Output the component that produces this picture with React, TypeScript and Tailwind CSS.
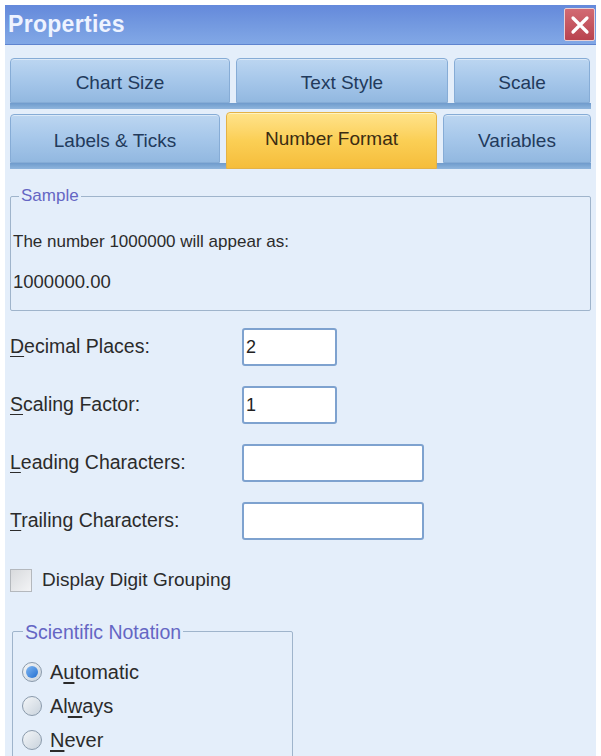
import React from 'react';

const font = { fontFamily: '"Liberation Sans", Arial, sans-serif' };

type Tab = { label: string; w: string; active?: boolean };

const row1: Tab[] = [
  { label: 'Chart Size', w: 'w-[220px]' },
  { label: 'Text Style', w: 'w-[212px]' },
  { label: 'Scale', w: 'w-[136px]' },
];

const row2: Tab[] = [
  { label: 'Labels & Ticks', w: 'w-[210px]' },
  { label: 'Number Format', w: 'w-[211px]', active: true },
  { label: 'Variables', w: 'w-[148px]' },
];

function TabRow({ tabs, h }: { tabs: Tab[]; h: string }) {
  return (
    <div className="flex flex-col">
      <div className={`flex items-end gap-[6px] px-[5px] ${h}`}>
        {tabs.map((t) =>
          t.active ? (
            <div
              key={t.label}
              className={`${t.w} h-[57px] -mb-[6px] relative z-10 flex items-center justify-center pb-[2px] rounded-t-[4px] border border-[#e4b246] bg-gradient-to-b from-[#ffe38a] via-[#fbcf55] to-[#f5bd3a] text-[19px] text-[#3b2c12] shadow-[inset_0_1px_0_#fff3c0]`}
            >
              {t.label}
            </div>
          ) : (
            <div
              key={t.label}
              className={`${t.w} h-full flex items-center justify-center pt-[6px] rounded-t-[4px] border border-[#86acd6] bg-gradient-to-b from-[#bcd6f1] via-[#a6c7ea] to-[#92b8e0] text-[19px] text-[#223a5c] shadow-[inset_0_1px_0_#dbe9f8]`}
            >
              {t.label}
            </div>
          )
        )}
      </div>
      <div className="mx-[5px] h-[6px] bg-gradient-to-b from-[#6f9bcc] to-[#8fb5dd]" />
    </div>
  );
}

function Mn({ children }: { children: React.ReactNode }) {
  return <span className="underline underline-offset-[3px]">{children}</span>;
}

function Field({ label, value, wide }: { label: React.ReactNode; value?: string; wide?: boolean }) {
  return (
    <div className="flex items-center h-[38px]">
      <div className="w-[232px] text-[19.5px] text-[#2b2b2b]">{label}</div>
      <div
        className={`${wide ? 'w-[182px]' : 'w-[95px]'} h-[38px] rounded-[3px] border-2 border-[#7ea2cf] bg-white flex items-center px-[2px] text-[18px] text-[#222]`}
      >
        {value}
      </div>
    </div>
  );
}

function Radio({ checked, children }: { checked?: boolean; children: React.ReactNode }) {
  return (
    <div className="flex items-center gap-[8px] h-[34px]">
      <div className="w-[20px] h-[20px] rounded-full border border-[#8a9aab] bg-gradient-to-br from-[#f4f6f8] to-[#c9d3dd] flex items-center justify-center">
        {checked && <div className="w-[12px] h-[12px] rounded-full bg-gradient-to-br from-[#7fb6f0] to-[#1f6fd1]" />}
      </div>
      <span className="text-[20px] text-[#2b2b2b]">{children}</span>
    </div>
  );
}

export default function App() {
  return (
    <div className="w-[601px] h-[756px] bg-white pt-[5px] px-[5px] overflow-hidden" style={font}>
      <div className="h-full bg-[#e4eefa] overflow-hidden">
        {/* title bar */}
        <div className="h-[40px] flex items-center justify-between pl-[3px] pr-[1px] bg-gradient-to-b from-[#6489db] via-[#7399e0] to-[#82a8e6] border-b border-[#5f84cf]">
          <span className="text-[23px] font-bold text-[#eef3ff] tracking-[0.3px]">Properties</span>
          <div className="w-[31px] h-[33px] rounded-[2px] border border-[#e9d0d4] bg-gradient-to-b from-[#d26a73] to-[#b9434f] flex items-center justify-center">
            <svg width="20" height="20" viewBox="0 0 20 20">
              <path d="M3 3 L17 17 M17 3 L3 17" stroke="#fff" strokeWidth="3.2" strokeLinecap="round" />
            </svg>
          </div>
        </div>

        {/* tabs */}
        <div className="pt-[13px]">
          <TabRow tabs={row1} h="h-[45px]" />
          <div className="h-[5px]" />
          <TabRow tabs={row2} h="h-[49px]" />
        </div>

        <div className="px-[5px] pt-[19px]">
          <fieldset className="border border-[#9fb4cb] rounded-[2px] pl-[2px] h-[123px]">
            <legend className="ml-[6px] px-[2px] text-[17px] leading-[16px] text-[#6466c4]">Sample</legend>
            <div className="text-[17px] text-[#2b2b2b] mt-[25px]">The number 1000000 will appear as:</div>
            <div className="text-[18.5px] text-[#2b2b2b] mt-[13px]">1000000.00</div>
          </fieldset>

          <div className="flex flex-col gap-[20px] mt-[17px]">
            <Field label={<><Mn>D</Mn>ecimal Places:</>} value="2" />
            <Field label={<><Mn>S</Mn>caling Factor:</>} value="1" />
            <Field label={<><Mn>L</Mn>eading Characters:</>} wide />
            <Field label={<><Mn>T</Mn>railing Characters:</>} wide />
          </div>

          <div className="flex items-center gap-[10px] mt-[26px]">
            <div className="w-[22px] h-[23px] border border-[#b4b8bd] bg-gradient-to-br from-[#d8dadd] to-[#f3f4f6]" />
            <span className="text-[19px] text-[#2b2b2b]">Display Di<Mn>g</Mn>it Grouping</span>
          </div>

          <fieldset className="mt-[29px] ml-[2px] w-[281px] border border-[#9fb4cb] rounded-[2px] pl-[9px] h-[140px]">
            <legend className="ml-[1px] px-[2px] text-[19.5px] leading-[16px] text-[#6466c4]">Scientific Notation</legend>
            <div className="mt-[15px] flex flex-col">
              <Radio checked>A<Mn>u</Mn>tomatic</Radio>
              <Radio>Al<Mn>w</Mn>ays</Radio>
              <Radio><Mn>N</Mn>ever</Radio>
            </div>
          </fieldset>
        </div>
      </div>
    </div>
  );
}
